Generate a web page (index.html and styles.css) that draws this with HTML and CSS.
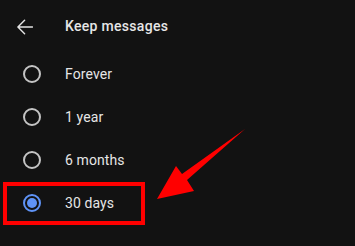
FILE: index.html
```html
<!DOCTYPE html>
<html>
<head>
<meta charset="utf-8">
<link rel="stylesheet" href="styles.css">
</head>
<body>
<div class="screen">
  <div class="header">
    <svg class="back" width="16" height="16" viewBox="0 0 16 16">
      <path d="M15.5 8H1.2M7.6 1.2L0.9 8l6.7 6.8" fill="none" stroke="#e4e4e4" stroke-width="1.4" stroke-linecap="round" stroke-linejoin="round"/>
    </svg>
    <span class="title">Keep messages</span>
  </div>
  <div class="row"><span class="radio"></span><span class="label">Forever</span></div>
  <div class="row"><span class="radio"></span><span class="label">1 year</span></div>
  <div class="row"><span class="radio"></span><span class="label">6 months</span></div>
  <div class="row"><span class="radio checked"></span><span class="label">30 days</span></div>
  <div class="highlight"></div>
  <svg class="pointer" width="100" height="85" viewBox="0 0 100 85">
    <polygon points="7,79 26,46 32,54 95,9 37,60 44,71" fill="#ff0000"/>
  </svg>
</div>
</body>
</html>
```
FILE: styles.css
```css
html, body {
  margin: 0;
  padding: 0;
  background: #121212;
}
.screen {
  position: relative;
  width: 355px;
  height: 246px;
  overflow: hidden;
  font-family: Roboto, "Liberation Sans", sans-serif;
  color: #e6e6e6;
}
.header {
  height: 52px;
  display: flex;
  align-items: center;
  padding-left: 17px;
  gap: 32px;
}
.back {
  display: block;
  margin-top: 1px;
}
.title {
  font-size: 14px;
  font-weight: 500;
  letter-spacing: 0.3px;
}
.row {
  height: 43px;
  display: flex;
  align-items: center;
  padding-left: 23px;
  gap: 24px;
}
.label {
  font-size: 14px;
  letter-spacing: 0.1px;
}
.radio {
  width: 18px;
  height: 18px;
  box-sizing: border-box;
  border: 2px solid #c4c4c4;
  border-radius: 50%;
  display: flex;
  align-items: center;
  justify-content: center;
}
.radio.checked {
  border-color: #5f93f6;
}
.radio.checked::after {
  content: "";
  width: 10px;
  height: 10px;
  border-radius: 50%;
  background: #5f93f6;
}
.highlight {
  position: absolute;
  left: 3px;
  top: 182px;
  width: 142px;
  height: 43px;
  box-sizing: border-box;
  border: 4px solid #ff0000;
}
.pointer {
  position: absolute;
  left: 150px;
  top: 120px;
}
```
